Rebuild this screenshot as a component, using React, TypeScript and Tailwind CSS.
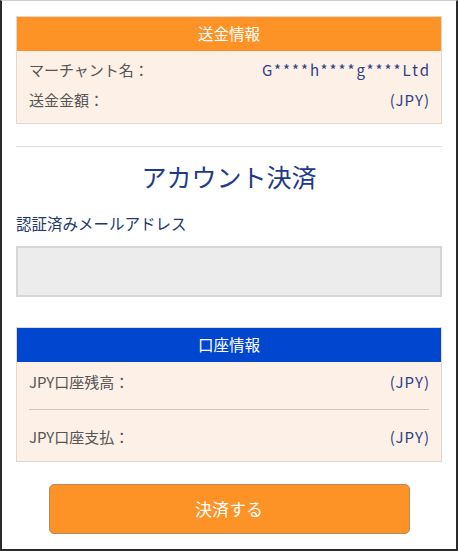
import React from "react";

const font = { fontFamily: '"Noto Sans CJK JP", "Noto Sans", sans-serif' };

function Row({ label, value, wide }: { label: string; value: string; wide?: boolean }) {
  return (
    <div className="flex items-center justify-between text-[15px] leading-[22px]">
      <span className="text-[#555555]">{label}</span>
      <span className={wide ? "text-[#2c3f86] tracking-[2px] -mr-[2px]" : "text-[#2c3f86] tracking-[1px] -mr-[1px]"}>
        {value}
      </span>
    </div>
  );
}

export default function App() {
  return (
    <div
      className="w-[458px] h-[551px] bg-white border-x-2 border-b-2 border-t border-x-[#2b2b2b] border-b-[#2b2b2b] border-t-[#cfcfcf] overflow-hidden"
      style={font}
    >
      <div className="px-[14px] pt-[15px]">
        {/* 送金情報 */}
        <div className="border border-[#e3d6cc]">
          <div className="h-[34px] bg-[#fd9226] text-white text-[15.5px] flex items-center justify-center">
            送金情報
          </div>
          <div className="bg-[#fdf0e6] px-[12px] pt-[8px] pb-[12px] flex flex-col gap-[8px]">
            <Row label="マーチャント名：" value="G****h****g****Ltd" wide />
            <Row label="送金金額：" value="(JPY)" />
          </div>
        </div>

        <div className="mt-[22px] h-px bg-[#dedede]" />

        <h2 className="mt-[12px] text-center text-[25px] leading-[34px] text-[#1f3a8a]">
          アカウント決済
        </h2>

        <div className="mt-[19px] text-[15.5px] leading-[22px] text-[#22396e]">認証済みメールアドレス</div>

        <div className="mt-[12px] h-[51px] bg-[#ececec] border-2 border-[#d6d6d6]" />

        {/* 口座情報 */}
        <div className="mt-[30px] border border-[#e3d6cc]">
          <div className="h-[34px] bg-[#0046cf] text-white text-[15.5px] flex items-center justify-center">
            口座情報
          </div>
          <div className="bg-[#fdf0e6] px-[12px]">
            <div className="pt-[9px] pb-[16px]">
              <Row label="JPY口座残高：" value="(JPY)" />
            </div>
            <div className="h-px bg-[#cfc6c0]" />
            <div className="pt-[16px] pb-[13px]">
              <Row label="JPY口座支払：" value="(JPY)" />
            </div>
          </div>
        </div>

        <div className="mt-[22px] flex justify-center">
          <button className="w-[361px] h-[50px] rounded-[5px] bg-[#fd9226] border border-[#b98a5e] text-white text-[17px]">
            決済する
          </button>
        </div>
      </div>
    </div>
  );
}
